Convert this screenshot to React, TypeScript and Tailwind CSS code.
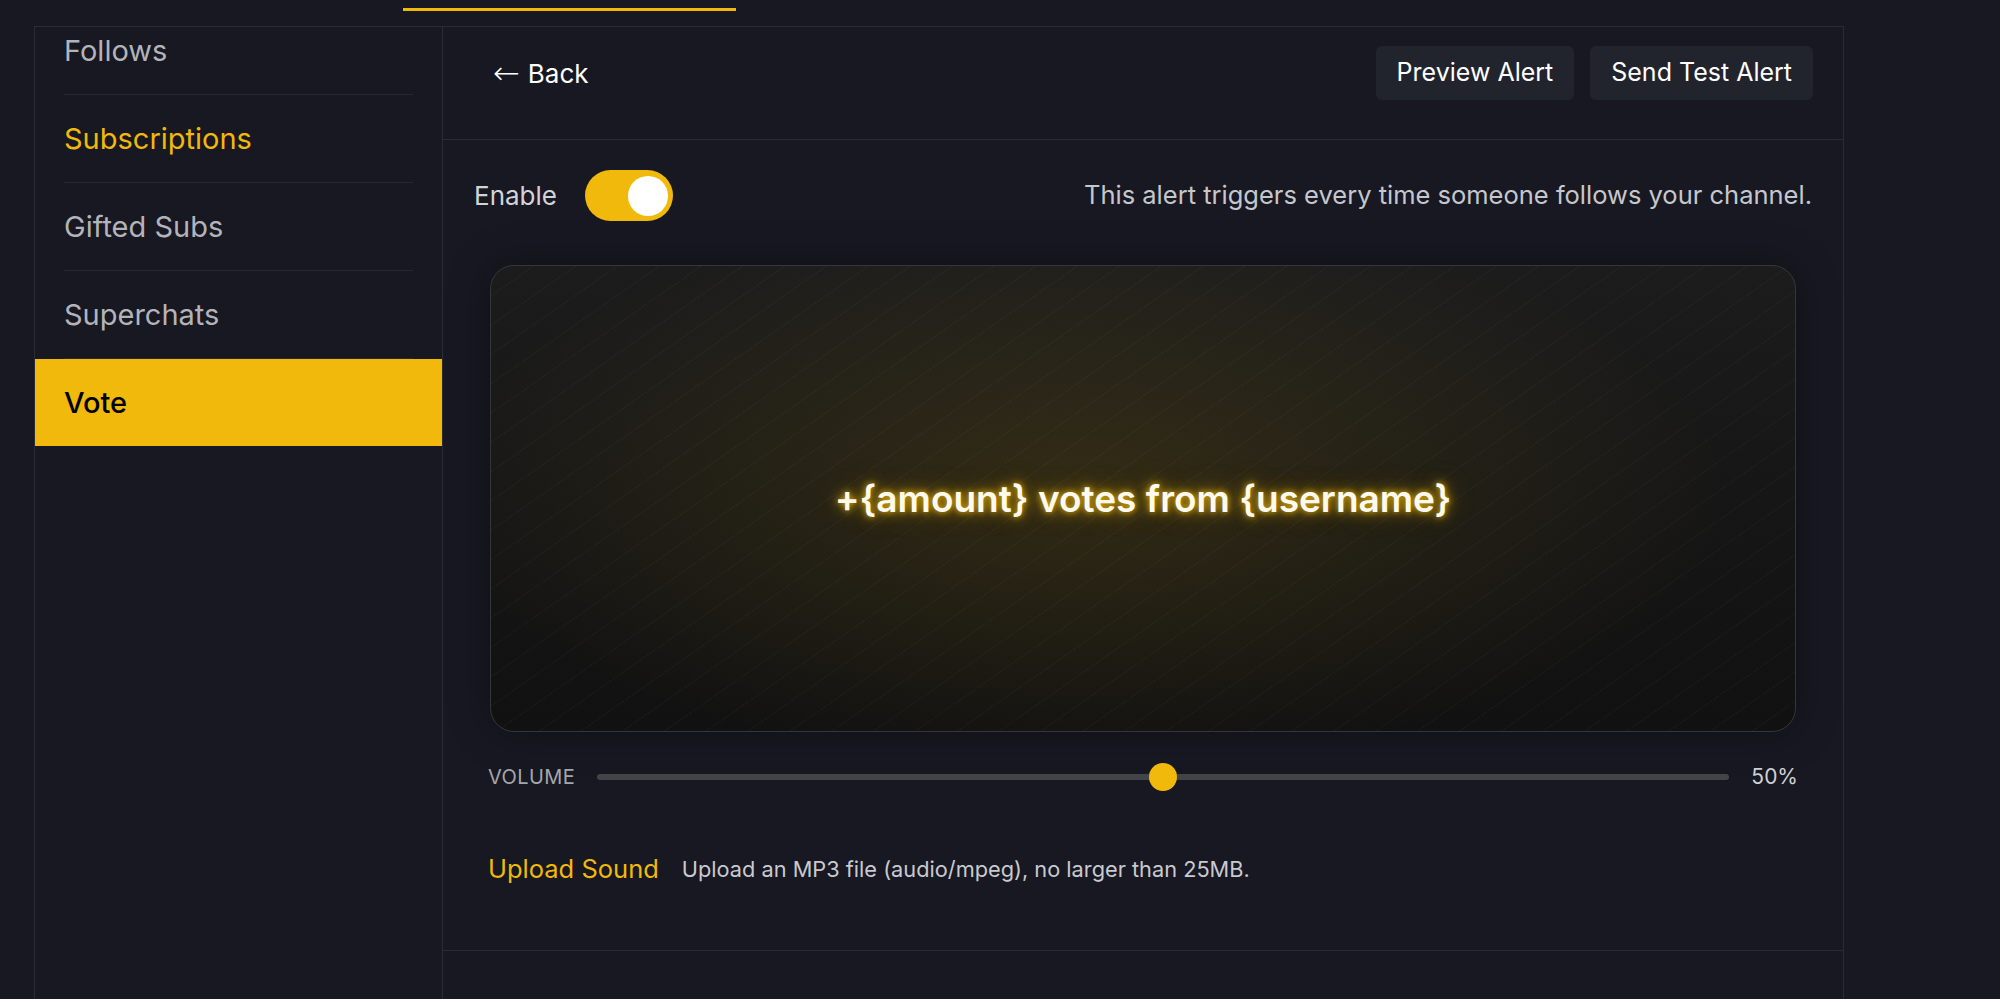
import React from "react";

function SideItem({ label, active, current }: { label: string; active?: boolean; current?: boolean }) {
  if (current) {
    return (
      <div className="h-[87px] bg-[#f0b90b] flex items-center px-[29px]">
        <span className="text-[29px] text-black font-medium">{label}</span>
      </div>
    );
  }
  return (
    <div className="px-[29px]">
      <div className="h-[88px] border-b border-[#262731] flex items-center">
        <span className={`text-[29px] ${active ? "text-[#f0b90b]" : "text-[#b3b4ba]"}`}>{label}</span>
      </div>
    </div>
  );
}

export default function App() {
  const stripes =
    "repeating-linear-gradient(145deg, rgba(255,255,255,0.028) 0px, rgba(255,255,255,0.028) 1px, transparent 1px, transparent 24px)";
  const glow =
    "radial-gradient(ellipse 50% 60% at 45% 48%, rgba(240,185,11,0.13), rgba(240,185,11,0.05) 60%, transparent 100%)";
  const base = "linear-gradient(180deg, #1c1c1c 0%, #161616 50%, #111111 100%)";

  return (
    <div
      className="w-full h-[999px] bg-[#171821] overflow-hidden flex flex-col"
      style={{ fontFamily: "Inter, 'Noto Sans', sans-serif" }}
    >
      {/* tab underline */}
      <div className="h-[26px] shrink-0">
        <div className="ml-[403px] mt-[8px] w-[333px] h-[3px] bg-[#f0b90b]" />
      </div>

      {/* panel */}
      <div className="ml-[34px] w-[1810px] flex-1 flex border-t border-l border-r border-[#2a2b34] min-h-0">
        {/* sidebar */}
        <div className="w-[408px] shrink-0 border-r border-[#2a2b34] overflow-hidden">
          <div className="-mt-[20px]">
            <SideItem label="Follows" />
            <SideItem label="Subscriptions" active />
            <SideItem label="Gifted Subs" />
            <SideItem label="Superchats" />
            <SideItem label="Vote" current />
          </div>
        </div>

        {/* main */}
        <div className="flex-1 flex flex-col min-w-0">
          {/* header */}
          <div className="h-[113px] shrink-0 border-b border-[#2a2b34] flex items-start justify-between pt-[19px] pl-[50px] pr-[30px]">
            <div className="h-[54px] flex items-center text-[26px] text-white">
              <span className="font-extralight text-[32px] leading-none" style={{ fontFamily: "'DejaVu Sans', sans-serif" }}>←</span>
              <span className="ml-[8px]">Back</span>
            </div>
            <div className="flex gap-[16px]">
              <button className="h-[54px] px-[21px] rounded-[6px] bg-[#22242d] text-white text-[25px]">Preview Alert</button>
              <button className="h-[54px] px-[21px] rounded-[6px] bg-[#22242d] text-white text-[25px]">Send Test Alert</button>
            </div>
          </div>

          {/* content */}
          <div className="h-[811px] shrink-0 border-b border-[#2a2b34] px-[31px] pt-[30px] flex flex-col">
            <div className="flex items-center justify-between h-[51px]">
              <div className="flex items-center gap-[28px]">
                <span className="text-[26px] text-[#d2d3d8]">Enable</span>
                <div className="w-[88px] h-[51px] rounded-full bg-[#f0b90b] flex items-center justify-end pr-[5px]">
                  <div className="w-[40px] h-[40px] rounded-full bg-white" />
                </div>
              </div>
              <span className="text-[25.5px] text-[#c6c7cd]">This alert triggers every time someone follows your channel.</span>
            </div>

            <div
              className="mt-[44px] mx-[16px] h-[467px] rounded-[24px] border-[1.5px] border-[#35363a] shadow-[0_0_40px_rgba(0,0,0,0.35)] flex items-center justify-center"
              style={{ backgroundImage: `${stripes}, ${glow}, ${base}` }}
            >
              <span
                className="text-[37px] font-semibold text-[#fffaf0]"
                style={{
                  textShadow:
                    "0 0 6px rgba(240,185,11,0.9), 0 0 14px rgba(240,185,11,0.6), 0 0 28px rgba(240,185,11,0.35)",
                }}
              >
                +{"{amount}"} votes from {"{username}"}
              </span>
            </div>

            <div className="mt-[31px] h-[28px] flex items-center px-[14px]">
              <span className="text-[20px] tracking-[0.02em] text-[#a5a6ab] w-[87px]">VOLUME</span>
              <div className="ml-[22px] flex-1 h-[6px] rounded-full bg-[#434448] relative">
                <div className="absolute left-1/2 top-1/2 -translate-x-1/2 -translate-y-1/2 w-[28px] h-[28px] rounded-full bg-[#f0b90b]" />
              </div>
              <span className="ml-[22px] text-[21px] text-[#cfd0d5]">50%</span>
            </div>

            <div className="mt-[59px] flex items-center px-[14px]">
              <span className="text-[25.5px] text-[#f0b90b]">Upload Sound</span>
              <span className="ml-[23px] text-[21.75px] text-[#c9cacf]">Upload an MP3 file (audio/mpeg), no larger than 25MB.</span>
            </div>
          </div>
        </div>
      </div>
    </div>
  );
}
